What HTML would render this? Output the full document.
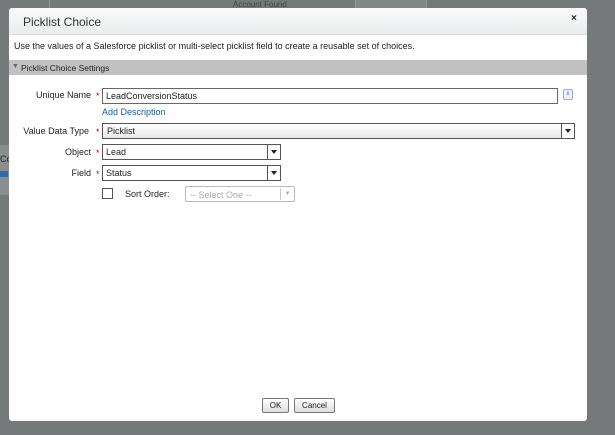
<!DOCTYPE html>
<html><head><style>
*{margin:0;padding:0;box-sizing:border-box}
body{width:615px;height:435px;background:#757979;font-family:"Liberation Sans",Arial,sans-serif;font-size:9px;color:#222;position:relative;overflow:hidden}
.a{position:absolute}
.dlg{left:9px;top:8px;width:578px;height:413px;background:#fff;border-radius:3px;overflow:hidden}
.hdr{left:0;top:0;width:578px;height:27px;background:linear-gradient(#fafafa,#eaeced);border-bottom:1px solid #dcdcdc}
.lbl{text-align:right;width:80px;font-size:9px}
.req{color:#c00;font-size:9px}
.inp{border:1px solid #666;background:#fff;height:16px;padding:2px 3px;font-size:9px}
.sel{border:1px solid #555;background:linear-gradient(#fff,#e8e8e8);height:16px;padding:2px 4px;font-size:9px}
.arr{position:absolute;right:0;top:0;width:13px;height:14px;border-left:1px solid #555;background:#fff}
.arr:after{content:"";position:absolute;left:3px;top:5px;border-left:3px solid transparent;border-right:3px solid transparent;border-top:4px solid #222}
.btn{border:1px solid #777;border-radius:2px;background:linear-gradient(#fff,#ddd);height:15px;font-size:8px;text-align:center;line-height:13px}
</style></head><body>
<div class="a" style="left:49px;top:0;width:1px;height:8px;background:#999"></div>
<div class="a" style="left:233px;top:0px;font-size:8px;color:#444">Account Found</div>
<div class="a" style="left:355px;top:0;width:72px;height:9px;border:1px solid #999;border-top:0;background:#828686;border-radius:0 0 3px 3px"></div>
<div class="a" style="left:0;top:145px;width:9px;height:50px;background:#8a8e8e"></div>
<div class="a" style="left:0;top:154px;font-size:9px;color:#222">Co</div>
<div class="a" style="left:0;top:171px;width:8px;height:6px;background:#2a6fa8"></div>
<div class="a dlg">
 <div class="a hdr"></div>
 <div class="a" style="left:14px;top:7px;font-size:12px;color:#333">Picklist Choice</div>
 <div class="a" style="left:562px;top:5px;font-size:10px;font-weight:bold">×</div>
 <div class="a" style="left:5px;top:33px;font-size:9px">Use the values of a Salesforce picklist or multi-select picklist field to create a reusable set of choices.</div>
 <div class="a" style="left:0;top:52px;width:578px;height:15px;background:#c1c1c1"></div>
 <div class="a" style="left:3px;top:55px;font-size:7px;color:#666">▼</div>
 <div class="a" style="left:12px;top:55px;font-size:8.5px">Picklist Choice Settings</div>
</div>
<div class="a lbl" style="left:11px;top:90px">Unique Name</div>
<div class="a req" style="left:96px;top:91px">*</div>
<div class="a inp" style="left:102px;top:88px;width:456px">LeadConversionStatus</div>
<div class="a" style="left:563px;top:89px;width:10px;height:11px;border:1px solid #aab;border-radius:2px;background:#eef;font-size:6px;color:#15c;text-align:center;line-height:9px;font-weight:bold">ı</div>
<div class="a" style="left:102px;top:107px;color:#1a5bab">Add Description</div>
<div class="a lbl" style="left:9px;top:126px">Value Data Type</div>
<div class="a req" style="left:96px;top:127px">*</div>
<div class="a sel" style="left:102px;top:123px;width:473px">Picklist<span class="arr"></span></div>
<div class="a lbl" style="left:11px;top:147px">Object</div>
<div class="a req" style="left:96px;top:148px">*</div>
<div class="a inp" style="left:102px;top:144px;width:179px;border-color:#555">Lead<span class="arr"></span></div>
<div class="a lbl" style="left:11px;top:168px">Field</div>
<div class="a req" style="left:96px;top:169px">*</div>
<div class="a inp" style="left:102px;top:165px;width:179px;border-color:#555">Status<span class="arr"></span></div>
<div class="a" style="left:102px;top:188px;width:11px;height:11px;border:1px solid #555;background:#fff"></div>
<div class="a" style="left:125px;top:189px">Sort Order:</div>
<div class="a" style="left:185px;top:186px;width:110px;height:16px;border:1px solid #bbb;border-radius:2px;color:#aaa;padding:3px 4px">-- Select One --<span style="position:absolute;right:0;top:1px;width:14px;height:12px;border-left:1px solid #ccc;text-align:center;font-size:6px;line-height:12px">▼</span></div>
<div class="a btn" style="left:262px;top:398px;width:27px">OK</div>
<div class="a btn" style="left:294px;top:398px;width:41px">Cancel</div>
</body></html>
